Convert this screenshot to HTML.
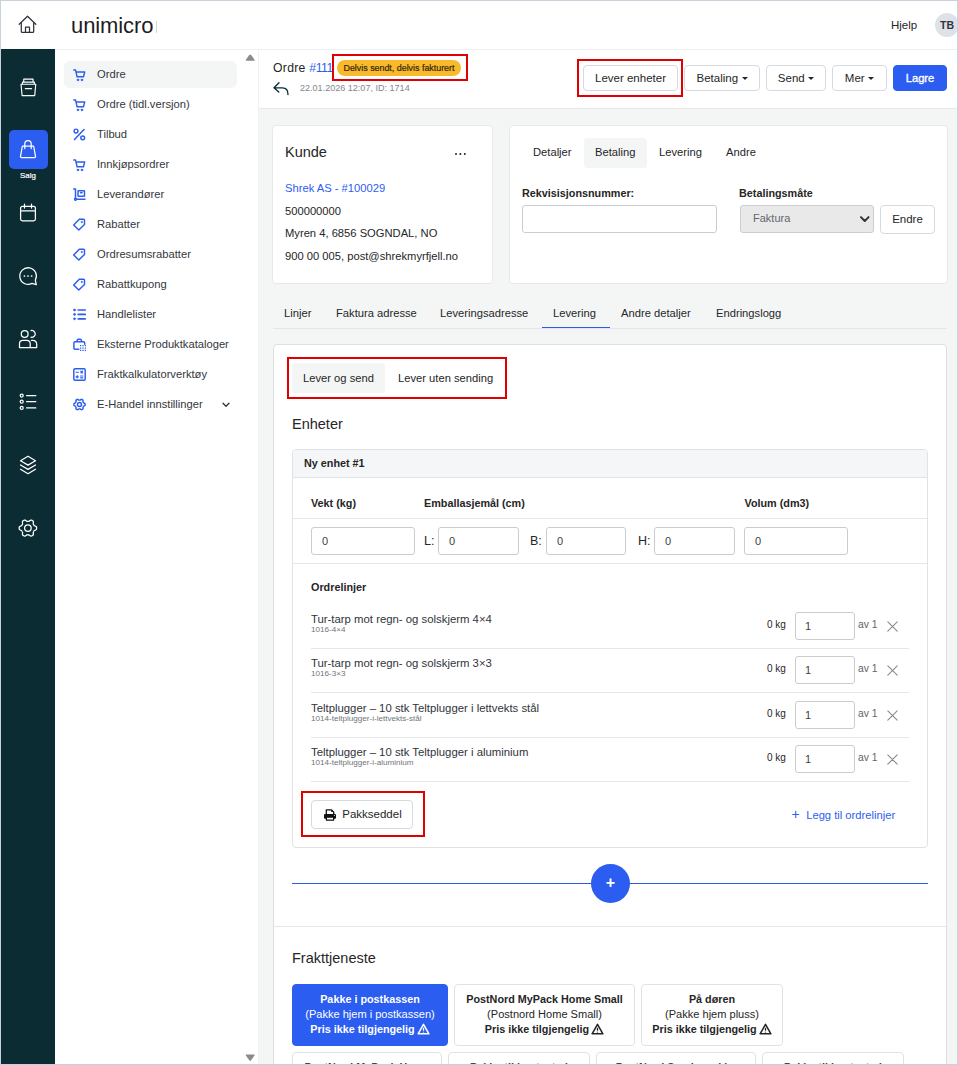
<!DOCTYPE html>
<html lang="nb">
<head>
<meta charset="utf-8">
<title>Ordre #111</title>
<style>
*{box-sizing:border-box;margin:0;padding:0}
html,body{width:958px;height:1065px;overflow:hidden;background:#fff}
body{font-family:"Liberation Sans",sans-serif;color:#262626;font-size:12px;position:relative}
#frame{position:absolute;left:0;top:0;width:958px;height:1065px;border:1px solid #c9d1db;border-right-width:1px;overflow:hidden;z-index:50;pointer-events:none}
.abs{position:absolute}
.t{position:absolute;white-space:nowrap;line-height:16px}
.b{font-weight:700}
svg{position:absolute;overflow:visible}
/* top header */
#top{position:absolute;left:0;top:0;width:958px;height:50px;background:#fff;border-bottom:1px solid #eef0f1}
#rail{position:absolute;left:0;top:49px;width:55px;height:1016px;background:#0c2c34}
#menu{position:absolute;left:55px;top:49px;width:189px;height:1016px;background:#fff}
#scroll{position:absolute;left:244px;top:49px;width:14px;height:1016px;background:#fff}
#main{position:absolute;left:258px;top:49px;width:700px;height:1016px;background:#f4f6f6;border-left:1px solid #f0f1f2}
#toolbar{position:absolute;left:259px;top:49px;width:699px;height:60px;background:#fff;border-bottom:1px solid #e6e8eb}
#toolbar>*{margin-left:-1px}
.mi{position:absolute;left:97px;white-space:nowrap;font-size:11.2px;line-height:16px;color:#33373c}
.btn{position:absolute;border:1px solid #d5dae1;border-radius:4px;background:#fff;font-size:11.5px;text-align:center;white-space:nowrap;color:#262626}
.card{position:absolute;background:#fff;border:1px solid #e9e9ea;border-radius:4px}
.inp{position:absolute;background:#fff;border:1px solid #c9cdd2;border-radius:3px;font-size:11px;color:#3a3f45;padding-left:10px}
.red{position:absolute;border:2px solid #e00000}
.car{display:inline-block;width:0;height:0;border-left:3px solid transparent;border-right:3px solid transparent;border-top:3.500px solid #262626;vertical-align:2px;margin-left:3.500px}
.ship div:nth-child(2){font-size:11.050px}
.ship{position:absolute;border:1px solid #dfe2e6;border-radius:4px;background:#fff;text-align:center;font-size:10.800px;line-height:15px;padding-top:7px;white-space:nowrap;color:#262626}
.hl{position:absolute;height:1px;background:#e4e6e9}
</style>
</head>
<body>
<div id="top">
<svg style="left:18px;top:15.300px" width="19" height="19" viewBox="0 0 19 19" fill="none" stroke="#30343a" stroke-width="1.25" stroke-linecap="round" stroke-linejoin="round"><path d="M1.2 9.3 9.5 1.2l8.3 8.1"/><path d="M3.3 7.6v8.9q0 .9.9.9h10.600000000000001q.9 0 .9-.9V7.6"/><path d="M7.5 17.2v-5h4v5"/></svg>
<div class="t" style="left:71px;top:13px;font-size:22px;line-height:26px;letter-spacing:-.1px;color:#1d1d1f">unimicro</div>
<div class="abs" style="left:156px;top:21px;width:1px;height:12px;background:#d5d7da"></div>
<div class="t" style="left:891px;top:17px;font-size:11.5px;color:#262626">Hjelp</div>
<div class="abs" style="left:935px;top:13px;width:24px;height:24px;border-radius:50%;background:#dde2e9"></div>
<div class="t b" style="left:940px;top:17px;font-size:10.5px;color:#30343a">TB</div>
</div>
<div id="rail">
<svg style="left:19.600px;top:28.800px" width="16.800" height="18.600" viewBox="0 0 18 20" fill="none" stroke="#fff" stroke-width="1.25" stroke-linecap="round" stroke-linejoin="round"><path d="M4 4.400V1.200h10v3.200M2.600 6.700V4.400h12.800v2.300M1.100 6.700h15.800l-1.100 12.200H2.200zM5.700 11.500h6.700"/></svg>
<div class="abs" style="left:9px;top:81px;width:39px;height:39px;border-radius:5px;background:#2b5df0"></div>
<svg style="left:19px;top:90px" width="18" height="20" viewBox="0 0 18 20" fill="none" stroke="#fff" stroke-width="1.25" stroke-linecap="round" stroke-linejoin="round"><path d="M3.400 7h11.200l1.900 10.300q.2 1.200-1 1.200H2.500q-1.200 0-1-1.200z"/><path d="M5.800 9.500V4.700a3.200 3.200 0 0 1 6.400 0v4.800"/></svg>
<div class="t" style="left:0;width:56px;text-align:center;top:121px;font-size:7.900px;line-height:12px;color:#fff;-webkit-text-stroke:.2px #fff">Salg</div>
<svg style="left:19px;top:154px" width="18" height="19" viewBox="0 0 18 19" fill="none" stroke="#fff" stroke-width="1.25" stroke-linecap="round" stroke-linejoin="round"><rect x="1.600" y="3.300" width="14.800" height="14.500" rx="1.800"/><path d="M1.600 7.900h14.800M5.500 1.200v3.800M12.500 1.200v3.800"/></svg>
<svg style="left:18px;top:217px" width="20" height="20" viewBox="0 0 20 20" fill="none" stroke="#fff" stroke-width="1.25" stroke-linecap="round" stroke-linejoin="round"><path d="M17.300 14.200A8.300 8.300 0 1 0 14 17.400l4.300 1.300z"/><path d="M6.400 10h.1M10 10h.1M13.600 10h.1" stroke-width="1.700"/></svg>
<svg style="left:18px;top:280px" width="20" height="20" viewBox="0 0 20 20" fill="none" stroke="#fff" stroke-width="1.25" stroke-linecap="round" stroke-linejoin="round"><circle cx="6.700" cy="4.900" r="3.400"/><path d="M13 1.600a3.400 3.400 0 1 1 0 6.600"/><path d="M1.500 18.600v-3.800q0-3.500 3.500-3.500h3.700q3.500 0 3.500 3.500v3.800zM13.500 11.300h1.200q4 0 4 4.200v3.100h-6.300"/></svg>
<svg style="left:18px;top:344px" width="20" height="18" viewBox="0 0 20 18" fill="none" stroke="#fff" stroke-width="1.25" stroke-linecap="round" stroke-linejoin="round"><circle cx="3.700" cy="2.600" r="1.500"/><circle cx="3.700" cy="8.700" r="1.500"/><circle cx="3.700" cy="14.900" r="1.500"/><path d="M8.600 2.600h9.200M8.600 8.700h9.200M8.600 14.900h9.200"/></svg>
<svg style="left:19px;top:406px" width="18" height="20" viewBox="0 0 18 20" fill="none" stroke="#fff" stroke-width="1.25" stroke-linecap="round" stroke-linejoin="round"><path d="M9 1.300 1.500 5.700 9 10.100l7.500-4.400z"/><path d="M1.500 10 9 14.400 16.500 10M1.500 14.300 9 18.700l7.500-4.400"/></svg>
<svg style="left:18px;top:469px" width="20" height="20" viewBox="0 0 20 20" fill="none" stroke="#fff" stroke-width="1.25" stroke-linecap="round" stroke-linejoin="round"><circle cx="9.9" cy="10.1" r="3.300"/><path d="M18.60 10.10 18.59 9.80 18.58 9.49 18.55 9.19 18.52 8.89 18.22 8.63 17.89 8.40 17.52 8.20 17.15 8.02 16.78 7.86 16.43 7.72 16.11 7.59 16.02 7.37 15.92 7.16 15.82 6.95 15.70 6.75 15.58 6.55 15.45 6.35 15.32 6.16 15.18 5.98 15.22 5.63 15.28 5.26 15.33 4.86 15.36 4.45 15.36 4.03 15.33 3.63 15.26 3.24 15.01 3.06 14.76 2.89 14.51 2.72 14.25 2.57 13.98 2.42 13.71 2.28 13.44 2.15 13.16 2.03 12.79 2.16 12.42 2.34 12.07 2.55 11.72 2.78 11.40 3.02 11.11 3.26 10.83 3.47 10.60 3.44 10.37 3.42 10.13 3.40 9.90 3.40 9.67 3.40 9.43 3.42 9.20 3.44 8.97 3.47 8.69 3.26 8.40 3.02 8.08 2.78 7.73 2.55 7.38 2.34 7.01 2.16 6.64 2.03 6.36 2.15 6.09 2.28 5.82 2.42 5.55 2.57 5.29 2.72 5.04 2.89 4.79 3.06 4.54 3.24 4.47 3.63 4.44 4.03 4.44 4.45 4.47 4.86 4.52 5.26 4.58 5.63 4.62 5.98 4.48 6.16 4.35 6.35 4.22 6.55 4.10 6.75 3.98 6.95 3.88 7.16 3.78 7.37 3.69 7.59 3.37 7.72 3.02 7.86 2.65 8.02 2.28 8.20 1.91 8.40 1.58 8.63 1.28 8.89 1.25 9.19 1.22 9.49 1.21 9.80 1.20 10.10 1.21 10.40 1.22 10.71 1.25 11.01 1.28 11.31 1.58 11.57 1.91 11.80 2.28 12.00 2.65 12.18 3.02 12.34 3.37 12.48 3.69 12.61 3.78 12.83 3.88 13.04 3.98 13.25 4.10 13.45 4.22 13.65 4.35 13.85 4.48 14.04 4.62 14.22 4.58 14.57 4.52 14.94 4.47 15.34 4.44 15.75 4.44 16.17 4.47 16.57 4.54 16.96 4.79 17.14 5.04 17.31 5.29 17.48 5.55 17.63 5.82 17.78 6.09 17.92 6.36 18.05 6.64 18.17 7.01 18.04 7.38 17.86 7.73 17.65 8.08 17.42 8.40 17.18 8.69 16.94 8.97 16.73 9.20 16.76 9.43 16.78 9.67 16.80 9.90 16.80 10.13 16.80 10.37 16.78 10.60 16.76 10.83 16.73 11.11 16.94 11.40 17.18 11.72 17.42 12.07 17.65 12.42 17.86 12.79 18.04 13.16 18.17 13.44 18.05 13.71 17.92 13.98 17.78 14.25 17.63 14.51 17.48 14.76 17.31 15.01 17.14 15.26 16.96 15.33 16.57 15.36 16.17 15.36 15.75 15.33 15.34 15.28 14.94 15.22 14.57 15.18 14.22 15.32 14.04 15.45 13.85 15.58 13.65 15.70 13.45 15.82 13.25 15.92 13.04 16.02 12.83 16.11 12.61 16.43 12.48 16.78 12.34 17.15 12.18 17.52 12.00 17.89 11.80 18.22 11.57 18.52 11.31 18.55 11.01 18.58 10.71 18.59 10.40z"/></svg>
</div>
<div id="menu">
<div class="abs" style="left:9px;top:12px;width:173px;height:27px;border-radius:6px;background:#f4f6f6"></div>
<svg style="left:17.500px;top:18.5px" width="13" height="13" viewBox="0 0 13 13" fill="none" stroke="#2b5df0" stroke-width="1.45" stroke-linecap="round" stroke-linejoin="round"><path d="M.8 2h1.700l.5 1.900h8.700l-1.200 4.900H4.100L3 3.900"/><circle cx="4.900" cy="11.900" r=".85" fill="#2b5df0" stroke-width=".8"/><circle cx="8.900" cy="11.900" r=".85" fill="#2b5df0" stroke-width=".8"/></svg>
<div class="mi" style="left:42px;top:17px">Ordre</div>
<svg style="left:17.500px;top:48.5px" width="13" height="13" viewBox="0 0 13 13" fill="none" stroke="#2b5df0" stroke-width="1.45" stroke-linecap="round" stroke-linejoin="round"><path d="M.8 2h1.700l.5 1.900h8.700l-1.200 4.900H4.100L3 3.900"/><circle cx="4.900" cy="11.900" r=".85" fill="#2b5df0" stroke-width=".8"/><circle cx="8.900" cy="11.900" r=".85" fill="#2b5df0" stroke-width=".8"/></svg>
<div class="mi" style="left:42px;top:47px">Ordre (tidl.versjon)</div>
<svg style="left:17.500px;top:78.5px" width="13" height="13" viewBox="0 0 13 13" fill="none" stroke="#2b5df0" stroke-width="1.45" stroke-linecap="round" stroke-linejoin="round"><path d="M11 1.500 1.500 11.500" stroke-width="1.500"/><circle cx="3" cy="3" r="1.900"/><circle cx="9.700" cy="9.800" r="1.900"/></svg>
<div class="mi" style="left:42px;top:77px">Tilbud</div>
<svg style="left:17.500px;top:108.5px" width="13" height="13" viewBox="0 0 13 13" fill="none" stroke="#2b5df0" stroke-width="1.45" stroke-linecap="round" stroke-linejoin="round"><path d="M.8 2h1.700l.5 1.900h8.700l-1.200 4.900H4.100L3 3.900"/><circle cx="4.900" cy="11.900" r=".85" fill="#2b5df0" stroke-width=".8"/><circle cx="8.900" cy="11.900" r=".85" fill="#2b5df0" stroke-width=".8"/></svg>
<div class="mi" style="left:42px;top:107px">Innkjøpsordrer</div>
<svg style="left:17.500px;top:138.5px" width="13" height="13" viewBox="0 0 13 13" fill="none" stroke="#2b5df0" stroke-width="1.45" stroke-linecap="round" stroke-linejoin="round"><path d="M.7 1h1.800v8.800M2.500 11.200h9.500"/><circle cx="2.500" cy="11.200" r="1" fill="#fff"/><rect x="5" y="2.700" width="6.500" height="5.600" rx=".6"/><path d="M7.500 4.800h1.600"/></svg>
<div class="mi" style="left:42px;top:137px">Leverandører</div>
<svg style="left:17.500px;top:168.5px" width="13" height="13" viewBox="0 0 13 13" fill="none" stroke="#2b5df0" stroke-width="1.45" stroke-linecap="round" stroke-linejoin="round"><path d="M6.300 1.200h4.300q.9 0 .9.900v4.300L5.800 12.100.7 7z" transform="rotate(0)"/><circle cx="8.700" cy="4" r=".7" fill="#2b5df0" stroke-width=".5"/></svg>
<div class="mi" style="left:42px;top:167px">Rabatter</div>
<svg style="left:17.500px;top:198.5px" width="13" height="13" viewBox="0 0 13 13" fill="none" stroke="#2b5df0" stroke-width="1.45" stroke-linecap="round" stroke-linejoin="round"><path d="M6.300 1.200h4.300q.9 0 .9.900v4.300L5.800 12.100.7 7z" transform="rotate(0)"/><circle cx="8.700" cy="4" r=".7" fill="#2b5df0" stroke-width=".5"/></svg>
<div class="mi" style="left:42px;top:197px">Ordresumsrabatter</div>
<svg style="left:17.500px;top:228.5px" width="13" height="13" viewBox="0 0 13 13" fill="none" stroke="#2b5df0" stroke-width="1.45" stroke-linecap="round" stroke-linejoin="round"><path d="M6.300 1.200h4.300q.9 0 .9.900v4.300L5.800 12.100.7 7z" transform="rotate(0)"/><circle cx="8.700" cy="4" r=".7" fill="#2b5df0" stroke-width=".5"/></svg>
<div class="mi" style="left:42px;top:227px">Rabattkupong</div>
<svg style="left:17.500px;top:258.5px" width="13" height="13" viewBox="0 0 13 13" fill="none" stroke="#2b5df0" stroke-width="1.45" stroke-linecap="round" stroke-linejoin="round"><path d="M5.200 2h7M5.200 6.400h7M5.200 10.800h7" stroke-width="1.700"/><circle cx="1.500" cy="2" r="1.050" fill="#2b5df0" stroke-width=".5"/><circle cx="1.500" cy="6.400" r="1.050" fill="#2b5df0" stroke-width=".5"/><circle cx="1.500" cy="10.800" r="1.050" fill="#2b5df0" stroke-width=".5"/></svg>
<div class="mi" style="left:42px;top:257px">Handlelister</div>
<svg style="left:17.500px;top:288.5px" width="13" height="13" viewBox="0 0 13 13" fill="none" stroke="#2b5df0" stroke-width="1.45" stroke-linecap="round" stroke-linejoin="round"><path d="M4.200 3.800V2.300q0-1.100 1.100-1.100h2q1.100 0 1.100 1.100v1.500M5.800 11.300H2q-1.100 0-1.100-1.100V4.900q0-1.100 1.100-1.100h8.600q1.100 0 1.100 1.100v1.300"/><path d="M7.600 7.700h.01M10 7.700h.01M12.400 7.700h.01M7.600 10h.01M10 10h.01M12.400 10h.01M7.600 12.300h.01M10 12.300h.01M12.400 12.300h.01" stroke-width="1.250" stroke-linecap="square"/></svg>
<div class="mi" style="left:42px;top:287px">Eksterne Produktkataloger</div>
<svg style="left:17.500px;top:318.5px" width="13" height="13" viewBox="0 0 13 13" fill="none" stroke="#2b5df0" stroke-width="1.45" stroke-linecap="round" stroke-linejoin="round"><rect x=".8" y=".8" width="11.400" height="11.400" rx="1.200"/><path d="M3 4.200h2.400M7.800 3.200l1.800 1.800M9.600 3.200 7.800 5M3 8.800h2.400M4.200 7.600V10M7.600 8h2.200M7.600 9.800h2.200" stroke-width="1.150"/></svg>
<div class="mi" style="left:42px;top:317px">Fraktkalkulatorverktøy</div>
<svg style="left:17.500px;top:348.5px" width="13" height="13" viewBox="0 0 13 13" fill="none" stroke="#2b5df0" stroke-width="1.45" stroke-linecap="round" stroke-linejoin="round"><circle cx="6.500" cy="6.500" r="2"/><path d="M12.12 6.50 12.11 6.21 12.09 5.91 12.01 5.63 11.69 5.40 11.33 5.21 10.96 5.05 10.62 4.92 10.50 4.72 10.40 4.51 10.29 4.31 10.17 4.11 10.04 3.93 9.93 3.72 9.99 3.36 10.04 2.96 10.05 2.56 10.01 2.16 9.80 1.95 9.56 1.79 9.31 1.63 9.05 1.49 8.79 1.37 8.50 1.29 8.14 1.45 7.79 1.67 7.48 1.91 7.19 2.14 6.96 2.14 6.73 2.13 6.50 2.12 6.27 2.13 6.04 2.14 5.81 2.14 5.52 1.91 5.21 1.67 4.86 1.45 4.50 1.29 4.21 1.37 3.95 1.49 3.69 1.63 3.44 1.79 3.20 1.95 2.99 2.16 2.95 2.56 2.96 2.96 3.01 3.36 3.07 3.72 2.96 3.93 2.83 4.11 2.71 4.31 2.60 4.51 2.50 4.72 2.38 4.92 2.04 5.05 1.67 5.21 1.31 5.40 0.99 5.63 0.91 5.91 0.89 6.21 0.88 6.50 0.89 6.79 0.91 7.09 0.99 7.37 1.31 7.60 1.67 7.79 2.04 7.95 2.38 8.08 2.50 8.28 2.60 8.49 2.71 8.69 2.83 8.89 2.96 9.07 3.07 9.28 3.01 9.64 2.96 10.04 2.95 10.44 2.99 10.84 3.20 11.05 3.44 11.21 3.69 11.37 3.95 11.51 4.21 11.63 4.50 11.71 4.86 11.55 5.21 11.33 5.52 11.09 5.81 10.86 6.04 10.86 6.27 10.87 6.50 10.88 6.73 10.87 6.96 10.86 7.19 10.86 7.48 11.09 7.79 11.33 8.14 11.55 8.50 11.71 8.79 11.63 9.05 11.51 9.31 11.37 9.56 11.21 9.80 11.05 10.01 10.84 10.05 10.44 10.04 10.04 9.99 9.64 9.93 9.28 10.04 9.07 10.17 8.89 10.29 8.69 10.40 8.49 10.50 8.28 10.62 8.08 10.96 7.95 11.33 7.79 11.69 7.60 12.01 7.37 12.09 7.09 12.11 6.79z"/></svg>
<div class="mi" style="left:42px;top:347px">E-Handel innstillinger</div>
<svg style="left:167px;top:352.500px" width="8" height="6" viewBox="0 0 8 6" fill="none" stroke="#30343a" stroke-width="1.300" stroke-linecap="round" stroke-linejoin="round"><path d="M1 1.200 4 4.300 7 1.200"/></svg>
</div>
<div id="scroll">
<svg style="left:1.300px;top:4.500px" width="10.400" height="7.300" viewBox="0 0 10 7"><path d="M5 .4q.5 0 .9.600l3.300 4.600q.6 1-.6 1H1.400q-1.200 0-.6-1L4.100 1q.4-.6.9-.6z" fill="#8b8b8b"/></svg>
<svg style="left:1.300px;top:1005px" width="10.400" height="7.300" viewBox="0 0 10 7"><path d="M5 6.600q.5 0 .9-.6l3.300-4.600q.6-1-.6-1H1.400q-1.200 0-.6 1L4.100 6q.4.600.9.600z" fill="#8b8b8b"/></svg>
</div>
<div id="main"></div>
<div id="toolbar">
<div class="t" style="left:15px;top:11px;font-size:12.200px;color:#262626;letter-spacing:.3px">Ordre <span style="color:#2c5ef0;letter-spacing:-.45px">#111</span></div>
<div class="abs" style="left:79px;top:11px;width:124px;height:16px;border-radius:8px;background:#f8ba2b"></div>
<div class="t" style="left:79px;width:124px;text-align:center;top:10.500px;font-size:8.900px;color:#33270a;-webkit-text-stroke:.2px #33270a">Delvis sendt, delvis fakturert</div>
<div class="red" style="left:74px;top:5px;width:136px;height:27px"></div>
<svg style="left:15px;top:33px" width="17" height="14" viewBox="0 0 17 14" fill="none" stroke="#0b2b33" stroke-width="1.350" stroke-linecap="round" stroke-linejoin="round"><path d="M6 .8 1 5.800l4.800 4.200M1.200 5.800h8.300q5.500 0 5.500 6.700"/></svg>
<div class="t" style="left:42px;top:31px;font-size:9.050px;color:#82878d">22.01.2026 12:07, ID: 1714</div>
<div class="btn" style="left:325px;top:16px;width:95px;height:26px;line-height:24px">Lever enheter</div>
<div class="red" style="left:319px;top:10px;width:106px;height:38px"></div>
<div class="btn" style="left:426px;top:16px;width:76px;height:26px;line-height:24px">Betaling<i class="car"></i></div>
<div class="btn" style="left:508px;top:16px;width:60px;height:26px;line-height:24px">Send<i class="car"></i></div>
<div class="btn" style="left:574px;top:16px;width:55px;height:26px;line-height:24px">Mer<i class="car"></i></div>
<div class="btn" style="left:635px;top:16px;width:54px;height:26px;line-height:24px;background:#2b5df0;border-color:#2b5df0;color:#fff;font-size:11.200px;-webkit-text-stroke:.35px #fff">Lagre</div>
</div>
<div id="content" class="abs" style="left:0;top:0;width:958px;height:1065px">
<!-- Kunde card -->
<div class="card" style="left:272px;top:125px;width:221px;height:159px"></div>
<div class="t" style="left:285px;top:143px;font-size:14.500px;line-height:18px;color:#262626">Kunde</div>
<div class="abs" style="left:455px;top:153.200px;width:2.200px;height:2.200px;border-radius:50%;background:#0b2b33;box-shadow:4.400px 0 0 #0b2b33,8.800px 0 0 #0b2b33"></div>
<div class="t" style="left:285px;top:180px;font-size:11.200px;color:#2c5ef0">Shrek AS - #100029</div>
<div class="t" style="left:285px;top:203px;font-size:11.200px">500000000</div>
<div class="t" style="left:285px;top:225px;font-size:11.200px">Myren 4, 6856 SOGNDAL, NO</div>
<div class="t" style="left:285px;top:248px;font-size:11.200px">900 00 005, post@shrekmyrfjell.no</div>
<!-- Details card -->
<div class="card" style="left:509px;top:125px;width:439px;height:159px"></div>
<div class="abs" style="left:584px;top:138px;width:63px;height:30px;background:#f4f6f6;border-radius:3px"></div>
<div class="t" style="left:533px;top:144px;font-size:11.200px">Detaljer</div>
<div class="t" style="left:595px;top:144px;font-size:11.200px">Betaling</div>
<div class="t" style="left:659px;top:144px;font-size:11.200px">Levering</div>
<div class="t" style="left:726px;top:144px;font-size:11.200px">Andre</div>
<div class="t b" style="left:522px;top:185px;font-size:10.800px">Rekvisisjonsnummer:</div>
<div class="inp" style="left:522px;top:205px;width:195px;height:28px"></div>
<div class="t b" style="left:739px;top:185px;font-size:10.800px">Betalingsmåte</div>
<div class="inp" style="left:740px;top:205px;width:134px;height:28px;background:#e9e9ea;border-color:#cccdce;line-height:25px;padding-left:12px;color:#62676d">Faktura</div>
<svg style="left:859.500px;top:216px" width="9.500" height="6.700" viewBox="0 0 10 7" fill="none" stroke="#30343a" stroke-width="2.100" stroke-linecap="round" stroke-linejoin="round"><path d="M1 1.200 5 5.300 9 1.200"/></svg>
<div class="btn" style="left:880px;top:205px;width:55px;height:29px;line-height:27px">Endre</div>
<!-- tabs -->
<div class="hl" style="left:273px;top:328px;width:674px;background:#e3e5e8"></div>
<div class="abs" style="left:542px;top:326.500px;width:68px;height:1.500px;background:#2b5be0"></div>
<div class="t" style="left:284px;top:305px;font-size:11.200px">Linjer</div>
<div class="t" style="left:336px;top:305px;font-size:11.200px">Faktura adresse</div>
<div class="t" style="left:440px;top:305px;font-size:11.200px">Leveringsadresse</div>
<div class="t" style="left:553px;top:305px;font-size:11.200px">Levering</div>
<div class="t" style="left:621px;top:305px;font-size:11.200px">Andre detaljer</div>
<div class="t" style="left:716px;top:305px;font-size:11.200px">Endringslogg</div>
<!-- big card -->
<div class="card" style="left:273px;top:344px;width:674px;height:740px;border-color:#dedfe0"></div>
<div class="abs" style="left:292px;top:363px;width:93px;height:30px;background:#f4f6f6;border-radius:3px"></div>
<div class="t" style="left:303px;top:369.500px;font-size:11.200px">Lever og send</div>
<div class="t" style="left:398px;top:369.500px;font-size:11.200px">Lever uten sending</div>
<div class="red" style="left:287px;top:357px;width:220px;height:42px"></div>
<div class="t" style="left:292px;top:415px;font-size:14.500px;line-height:18px">Enheter</div>
<!-- unit card -->
<div class="card" style="left:292px;top:449px;width:636px;height:399px;border-color:#dfe2e6"></div>
<div class="abs" style="left:293px;top:450px;width:634px;height:28px;background:#f5f6f7;border-bottom:1px solid #e1e4e8;border-radius:3px 3px 0 0"></div>
<div class="t b" style="left:304px;top:455px;font-size:10.800px">Ny enhet #1</div>
<div class="t b" style="left:311px;top:495px;font-size:10.800px">Vekt (kg)</div>
<div class="t b" style="left:424px;top:495px;font-size:10.800px">Emballasjemål (cm)</div>
<div class="t b" style="left:744.500px;top:495px;font-size:10.800px">Volum (dm3)</div>
<div class="hl" style="left:293px;top:518px;width:634px"></div>
<div class="inp" style="left:311px;top:527px;width:104px;height:28px;line-height:26px">0</div>
<div class="t" style="left:424px;top:533px;font-size:12.500px">L:</div>
<div class="inp" style="left:438px;top:527px;width:81px;height:28px;line-height:26px">0</div>
<div class="t" style="left:530px;top:533px;font-size:12.500px">B:</div>
<div class="inp" style="left:546px;top:527px;width:80px;height:28px;line-height:26px">0</div>
<div class="t" style="left:638px;top:533px;font-size:12.500px">H:</div>
<div class="inp" style="left:654px;top:527px;width:81px;height:28px;line-height:26px">0</div>
<div class="inp" style="left:744px;top:527px;width:104px;height:28px;line-height:26px">0</div>
<div class="hl" style="left:293px;top:563px;width:634px"></div>
<div class="t b" style="left:311px;top:579px;font-size:10.800px">Ordrelinjer</div>
<div class="t" style="left:311px;top:611px;font-size:11.350px;color:#30343a">Tur-tarp mot regn- og solskjerm 4×4</div>
<div class="t" style="left:311px;top:625px;font-size:8.100px;line-height:10px;color:#6f757c">1016-4×4</div>
<div class="t" style="left:767px;top:617px;font-size:10px">0 kg</div>
<div class="inp" style="left:795px;top:612px;width:60px;height:28px;line-height:26px;padding-left:9px">1</div>
<div class="t" style="left:858px;top:617px;font-size:10.300px;color:#5f656b">av 1</div>
<svg style="left:886.500px;top:620.5px" width="11" height="11" viewBox="0 0 11 11" fill="none" stroke="#868b91" stroke-width="1.100" stroke-linecap="round"><path d="M.8.800l9.400 9.400M10.200.800.8 10.200"/></svg>
<div class="hl" style="left:311px;top:648px;width:598px"></div>
<div class="t" style="left:311px;top:655px;font-size:11.350px;color:#30343a">Tur-tarp mot regn- og solskjerm 3×3</div>
<div class="t" style="left:311px;top:669px;font-size:8.100px;line-height:10px;color:#6f757c">1016-3×3</div>
<div class="t" style="left:767px;top:661px;font-size:10px">0 kg</div>
<div class="inp" style="left:795px;top:656px;width:60px;height:28px;line-height:26px;padding-left:9px">1</div>
<div class="t" style="left:858px;top:661px;font-size:10.300px;color:#5f656b">av 1</div>
<svg style="left:886.500px;top:664.5px" width="11" height="11" viewBox="0 0 11 11" fill="none" stroke="#868b91" stroke-width="1.100" stroke-linecap="round"><path d="M.8.800l9.400 9.400M10.200.800.8 10.200"/></svg>
<div class="hl" style="left:311px;top:692px;width:598px"></div>
<div class="t" style="left:311px;top:700px;font-size:11.350px;color:#30343a">Teltplugger – 10 stk Teltplugger i lettvekts stål</div>
<div class="t" style="left:311px;top:714px;font-size:8.100px;line-height:10px;color:#6f757c">1014-teltplugger-i-lettvekts-stål</div>
<div class="t" style="left:767px;top:706px;font-size:10px">0 kg</div>
<div class="inp" style="left:795px;top:701px;width:60px;height:28px;line-height:26px;padding-left:9px">1</div>
<div class="t" style="left:858px;top:706px;font-size:10.300px;color:#5f656b">av 1</div>
<svg style="left:886.500px;top:709.5px" width="11" height="11" viewBox="0 0 11 11" fill="none" stroke="#868b91" stroke-width="1.100" stroke-linecap="round"><path d="M.8.800l9.400 9.400M10.200.800.8 10.200"/></svg>
<div class="hl" style="left:311px;top:737px;width:598px"></div>
<div class="t" style="left:311px;top:744px;font-size:11.350px;color:#30343a">Teltplugger – 10 stk Teltplugger i aluminium</div>
<div class="t" style="left:311px;top:758px;font-size:8.100px;line-height:10px;color:#6f757c">1014-teltplugger-i-aluminium</div>
<div class="t" style="left:767px;top:750px;font-size:10px">0 kg</div>
<div class="inp" style="left:795px;top:745px;width:60px;height:28px;line-height:26px;padding-left:9px">1</div>
<div class="t" style="left:858px;top:750px;font-size:10.300px;color:#5f656b">av 1</div>
<svg style="left:886.500px;top:753.5px" width="11" height="11" viewBox="0 0 11 11" fill="none" stroke="#868b91" stroke-width="1.100" stroke-linecap="round"><path d="M.8.800l9.400 9.400M10.200.800.8 10.200"/></svg>
<div class="hl" style="left:311px;top:781px;width:598px"></div>
<div class="btn" style="left:311px;top:800px;width:102px;height:29px;line-height:27px;padding-left:20px">Pakkseddel</div>
<svg style="left:324px;top:809px" width="12" height="12" viewBox="0 0 12 12"><path d="M2.300 5.200V.8h5l2.400 2.300v2.100" fill="#fff" stroke="#111" stroke-width="1.300" stroke-linejoin="round"/><path d="M7.300.8v2.300h2.400z" fill="#111"/><rect x="0" y="5" width="12" height="4.800" rx="1.100" fill="#111"/><path d="M2.400 8.200h7.200v3H2.400z" fill="#fff" stroke="#111" stroke-width="1.200" stroke-linejoin="round"/><circle cx="10.400" cy="6.500" r=".55" fill="#fff"/></svg>
<div class="red" style="left:301px;top:791px;width:124px;height:46px"></div>
<div class="t" style="left:791.500px;top:806px;font-size:11.200px;color:#2c5ef0"><span style="font-size:14px;margin-right:6.500px;vertical-align:-.5px">+</span>Legg til ordrelinjer</div>
<!-- add line -->
<div class="abs" style="left:292px;top:882.500px;width:636px;height:1.300px;background:#2b5be0"></div>
<div class="abs" style="left:591px;top:864px;width:39px;height:39px;border-radius:50%;background:#2b5df0"></div>
<div class="t b" style="left:591px;width:39px;text-align:center;top:875px;font-size:16px;color:#fff">+</div>
<div class="hl" style="left:274px;top:926px;width:672px"></div>
<div class="t" style="left:292px;top:949px;font-size:14.500px;line-height:18px">Frakttjeneste</div>
<div class="ship" style="left:292px;top:984px;width:156px;height:62px;background:#2b5df0;border-color:#2b5df0;color:#fff"><div class="b">Pakke i postkassen</div><div>(Pakke hjem i postkassen)</div><div class="b">Pris ikke tilgjengelig<svg style="position:relative;display:inline-block;vertical-align:-1.500px;margin-left:2px" width="13" height="12" viewBox="0 0 13 12"><path d="M6.500 1.400 11.900 10.800H1.100z" fill="none" stroke="#fff" stroke-width="1.550" stroke-linejoin="round"/><path d="M6.500 4.700v3M6.500 8.700v.9" stroke="#fff" stroke-width="1.300" stroke-linecap="butt"/></svg></div></div>
<div class="ship" style="left:454px;top:984px;width:181px;height:62px;"><div class="b">PostNord MyPack Home Small</div><div>(Postnord Home Small)</div><div class="b">Pris ikke tilgjengelig<svg style="position:relative;display:inline-block;vertical-align:-1.500px;margin-left:2px" width="13" height="12" viewBox="0 0 13 12"><path d="M6.500 1.400 11.900 10.800H1.100z" fill="none" stroke="#262626" stroke-width="1.550" stroke-linejoin="round"/><path d="M6.500 4.700v3M6.500 8.700v.9" stroke="#262626" stroke-width="1.300" stroke-linecap="butt"/></svg></div></div>
<div class="ship" style="left:641px;top:984px;width:142px;height:62px;"><div class="b">På døren</div><div>(Pakke hjem pluss)</div><div class="b">Pris ikke tilgjengelig<svg style="position:relative;display:inline-block;vertical-align:-1.500px;margin-left:2px" width="13" height="12" viewBox="0 0 13 12"><path d="M6.500 1.400 11.900 10.800H1.100z" fill="none" stroke="#262626" stroke-width="1.550" stroke-linejoin="round"/><path d="M6.500 4.700v3M6.500 8.700v.9" stroke="#262626" stroke-width="1.300" stroke-linecap="butt"/></svg></div></div>
<div class="ship" style="left:292px;top:1052px;padding-top:7px;width:150px;height:62px;color:#444"><div class="b">PostNord MyPack Home</div></div>
<div class="ship" style="left:448px;top:1052px;padding-top:7px;width:142px;height:62px;color:#444"><div class="b">Pakke til hentested</div></div>
<div class="ship" style="left:596px;top:1052px;padding-top:7px;width:160px;height:62px;color:#444"><div class="b">PostNord Servicepakke</div></div>
<div class="ship" style="left:762px;top:1052px;padding-top:7px;width:142px;height:62px;color:#444"><div class="b">Pakke til hentested</div></div>
</div>
<div class="abs" style="left:55px;top:49px;width:903px;height:1px;background:#eef0f1"></div>
<div id="frame"></div>
</body>
</html>
